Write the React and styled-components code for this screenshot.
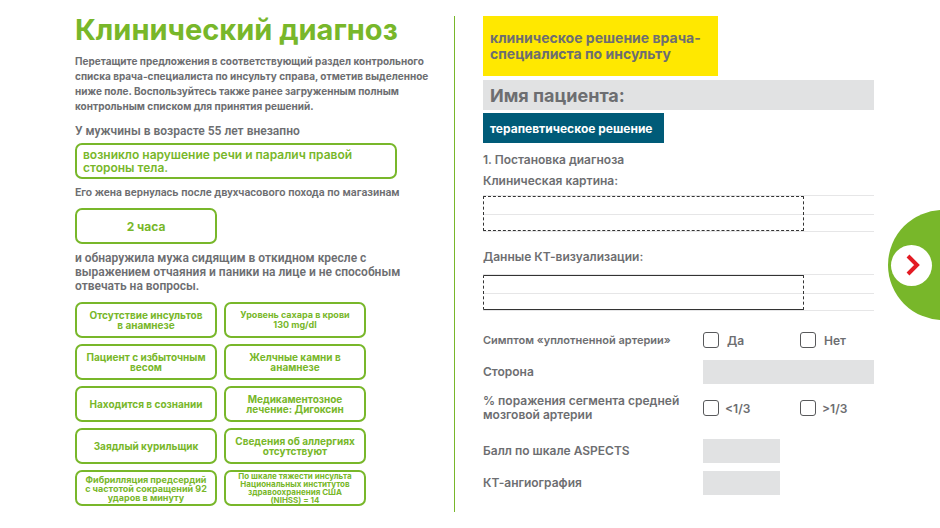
import React from "react";
import styled, { createGlobalStyle } from "styled-components";

const green = "#78b72a";
const gray = "#6d6e71";
const field = "#e1e2e3";

const GlobalStyle = createGlobalStyle`
  *, *::before, *::after { box-sizing: border-box; }
  body {
    margin: 0;
    background: #fff;
    color: ${gray};
    font-family: Inter, "Liberation Sans", sans-serif;
    font-size: 12px;
    font-weight: 600;
  }
  button, input, textarea { font: inherit; color: inherit; }
`;

const Page = styled.main`
  position: relative;
  min-height: 100vh;
  overflow: hidden;
  display: grid;
  grid-template-columns: minmax(0, 380fr) minmax(0, 419fr);
  padding: 16px 66px 16px 75px;
`;

const CasePanel = styled.section`
  border-right: 1px solid ${green};
  padding-right: 20px;
`;

const Title = styled.h1`
  margin: 0;
  color: ${green};
  font-size: 29px;
  line-height: 28px;
  font-weight: 700;
`;

const Intro = styled.p`
  margin: 10px 0;
  font-size: 10px;
  line-height: 15px;
  font-weight: 700;
`;

const Narrative = styled.p`
  margin: ${({ $space }) => $space || "0"};
  font-family: Roboto, "Liberation Sans", sans-serif;
  font-size: ${({ $small }) => ($small ? "11px" : "12px")};
  line-height: 14px;
  font-weight: 600;
`;

const Chip = styled.button`
  display: flex;
  align-items: center;
  justify-content: ${({ $wide }) => ($wide ? "flex-start" : "center")};
  width: ${({ $wide }) => ($wide ? "322px" : "142px")};
  max-width: 100%;
  height: 36px;
  padding: 0 ${({ $wide }) => ($wide ? "6px" : "2px")};
  border: 2px solid ${green};
  border-radius: 7px;
  background: #fff;
  color: ${green};
  font-size: ${({ $size }) => $size || 12}px;
  line-height: ${({ $leading }) => $leading || 13}px;
  font-weight: ${({ $wide }) => ($wide ? 600 : 700)};
  text-align: ${({ $wide }) => ($wide ? "left" : "center")};
  white-space: pre-line;
  cursor: grab;
`;

const ChipGrid = styled.div`
  display: grid;
  grid-template-columns: repeat(2, 142px);
  gap: 6px 7px;
  margin-top: 9px;
`;

const DecisionPanel = styled.section`
  padding-left: 28px;
`;

const Banner = styled.h2`
  display: flex;
  align-items: center;
  width: 60%;
  height: 60px;
  margin: 0 0 4px;
  padding: 0 7px;
  background: #ffe800;
  font-size: 14px;
  line-height: 16px;
  font-weight: 700;
  white-space: pre-line;
`;

const PatientRow = styled.label`
  display: flex;
  align-items: center;
  height: 30px;
  padding: 0 7px;
  background: ${field};
  font-size: 18px;
  font-weight: 700;
`;

const PatientInput = styled.input`
  flex: 1;
  min-width: 0;
  height: 26px;
  margin-left: 8px;
  padding: 0;
  border: 0;
  outline: 0;
  background: transparent;
`;

const Tag = styled.h3`
  display: flex;
  align-items: center;
  width: max-content;
  height: 30px;
  margin: 3px 0 9px;
  padding: 0 11px 0 7px;
  background: #005b78;
  color: #fff;
  font-size: 12px;
  font-weight: 700;
`;

const StepTitle = styled.h4`
  margin: 0 0 5px;
  font-size: 12px;
  line-height: 16px;
  font-weight: 600;
`;

const ZoneLabel = styled.label`
  display: block;
  margin-bottom: ${({ $gap }) => $gap};
  line-height: 16px;
`;

const RuledArea = styled.div`
  height: 37px;
  margin-bottom: 17px;
  border: solid #e6e6e7;
  border-width: 1px 0;
  background: linear-gradient(#e6e6e7, #e6e6e7) 0 18px / 100% 1px no-repeat;
`;

const DropZone = styled.textarea`
  display: block;
  width: 82%;
  height: 35px;
  padding: 2px 6px;
  border: 1px dashed #333;
  border-block-style: ${({ $solid }) => ($solid ? "solid" : "dashed")};
  border-radius: 1px;
  outline: 0;
  background: transparent;
  line-height: 16px;
  resize: none;
`;

const Criteria = styled.div`
  display: grid;
  grid-template-columns: minmax(0, 220fr) minmax(0, 171fr);
  align-items: center;
  row-gap: 8px;
`;

const CriterionLabel = styled.label`
  font-size: ${({ $small }) => ($small ? "11px" : "12px")};
  line-height: 14px;
`;

const Options = styled.div`
  display: grid;
  grid-template-columns: 97fr 74fr;
  height: ${({ $tall }) => ($tall ? "32px" : "24px")};
  align-items: center;
`;

const Option = styled.label`
  display: flex;
  align-items: center;
  gap: ${({ $tight }) => ($tight ? "6px" : "8px")};
`;

const Checkbox = styled.input`
  appearance: none;
  width: 16px;
  height: 16px;
  margin: 0;
  border: 1px solid #58595b;
  border-radius: 3px;
  background: #fff;
  &:checked { background: ${green}; }
`;

const ValueInput = styled.input`
  width: ${({ $short }) => ($short ? "45%" : "100%")};
  height: 24px;
  padding: 0 6px;
  border: 0;
  background: ${field};
`;

const Scores = styled(Criteria)`
  margin-top: 15px;
`;

const NextButton = styled.button`
  position: absolute;
  right: -58px;
  top: 210px;
  display: flex;
  align-items: center;
  width: 110px;
  height: 110px;
  padding: 0 0 0 3px;
  border: 0;
  border-radius: 50%;
  background: ${green};
  cursor: pointer;
`;

const NextDisc = styled.span`
  display: flex;
  align-items: center;
  justify-content: center;
  width: 41px;
  height: 41px;
  border-radius: 50%;
  background: #fff;
`;

const facts = [
  { text: "Отсутствие инсультов\nв анамнезе", size: 10 },
  { text: "Уровень сахара в крови\n130 mg/dl", size: 9 },
  { text: "Пациент с избыточным\nвесом", size: 10 },
  { text: "Желчные камни в\nанамнезе", size: 10 },
  { text: "Находится в сознании", size: 10 },
  { text: "Медикаментозное\nлечение: Дигоксин", size: 10 },
  { text: "Заядлый курильщик", size: 10 },
  { text: "Сведения об аллергиях\nотсутствуют", size: 10 },
  { text: "Фибрилляция предсердий\nс частотой сокращений 92\nударов в минуту", size: 9, leading: 9 },
  { text: "По шкале тяжести инсульта\nНациональных институтов\nздравоохранения США\n(NIHSS) = 14", size: 8, leading: 8 },
];

export default function App() {
  return (
    <>
      <GlobalStyle />
      <Page>
        <CasePanel>
          <Title>Клинический диагноз</Title>
          <Intro>
            Перетащите предложения в соответствующий раздел контрольного<br />
            списка врача-специалиста по инсульту справа, отметив выделенное<br />
            ниже поле. Воспользуйтесь также ранее загруженным полным<br />
            контрольным списком для принятия решений.
          </Intro>
          <Narrative $space="0 0 5px">У мужчины в возрасте 55 лет внезапно</Narrative>
          <Chip type="button" $wide>{"возникло нарушение речи и паралич правой\nстороны тела."}</Chip>
          <Narrative $small $space="7px 0 8px">Его жена вернулась после двухчасового похода по магазинам</Narrative>
          <Chip type="button">2 часа</Chip>
          <Narrative $space="7px 0 0">
            и обнаружила мужа сидящим в откидном кресле с<br />
            выражением отчаяния и паники на лице и не способным<br />
            отвечать на вопросы.
          </Narrative>
          <ChipGrid>
            {facts.map(({ text, size, leading }) => (
              <Chip key={text} type="button" $size={size} $leading={leading || 10}>{text}</Chip>
            ))}
          </ChipGrid>
        </CasePanel>

        <DecisionPanel>
          <Banner>{"клиническое решение врача-\nспециалиста по инсульту"}</Banner>
          <PatientRow>
            Имя пациента:
            <PatientInput type="text" />
          </PatientRow>
          <Tag>терапевтическое решение</Tag>

          <StepTitle>1. Постановка диагноза</StepTitle>
          <ZoneLabel htmlFor="clinical" $gap="6px">Клиническая картина:</ZoneLabel>
          <RuledArea><DropZone id="clinical" /></RuledArea>
          <ZoneLabel htmlFor="ct" $gap="9px">Данные КТ-визуализации:</ZoneLabel>
          <RuledArea><DropZone id="ct" $solid /></RuledArea>

          <Criteria>
            <CriterionLabel as="span" id="symptom" $small>Симптом «уплотненной артерии»</CriterionLabel>
            <Options role="group" aria-labelledby="symptom">
              <Option><Checkbox type="checkbox" />Да</Option>
              <Option><Checkbox type="checkbox" />Нет</Option>
            </Options>
            <CriterionLabel htmlFor="side">Сторона</CriterionLabel>
            <ValueInput id="side" type="text" />
            <CriterionLabel as="span" id="segment">% поражения сегмента средней<br />мозговой артерии</CriterionLabel>
            <Options $tall role="group" aria-labelledby="segment">
              <Option $tight><Checkbox type="checkbox" />&lt;1/3</Option>
              <Option $tight><Checkbox type="checkbox" />&gt;1/3</Option>
            </Options>
          </Criteria>
          <Scores>
            <CriterionLabel htmlFor="aspects">Балл по шкале ASPECTS</CriterionLabel>
            <ValueInput id="aspects" type="text" $short />
            <CriterionLabel htmlFor="angio">КТ-ангиография</CriterionLabel>
            <ValueInput id="angio" type="text" $short />
          </Scores>
        </DecisionPanel>

        <NextButton type="button" aria-label="Далее">
          <NextDisc>
            <svg width="16" height="22" viewBox="0 0 16 22" fill="none" stroke="#e31b23" strokeWidth="4" aria-hidden="true">
              <path d="M4 2 L13 11 L4 20" />
            </svg>
          </NextDisc>
        </NextButton>
      </Page>
    </>
  );
}
